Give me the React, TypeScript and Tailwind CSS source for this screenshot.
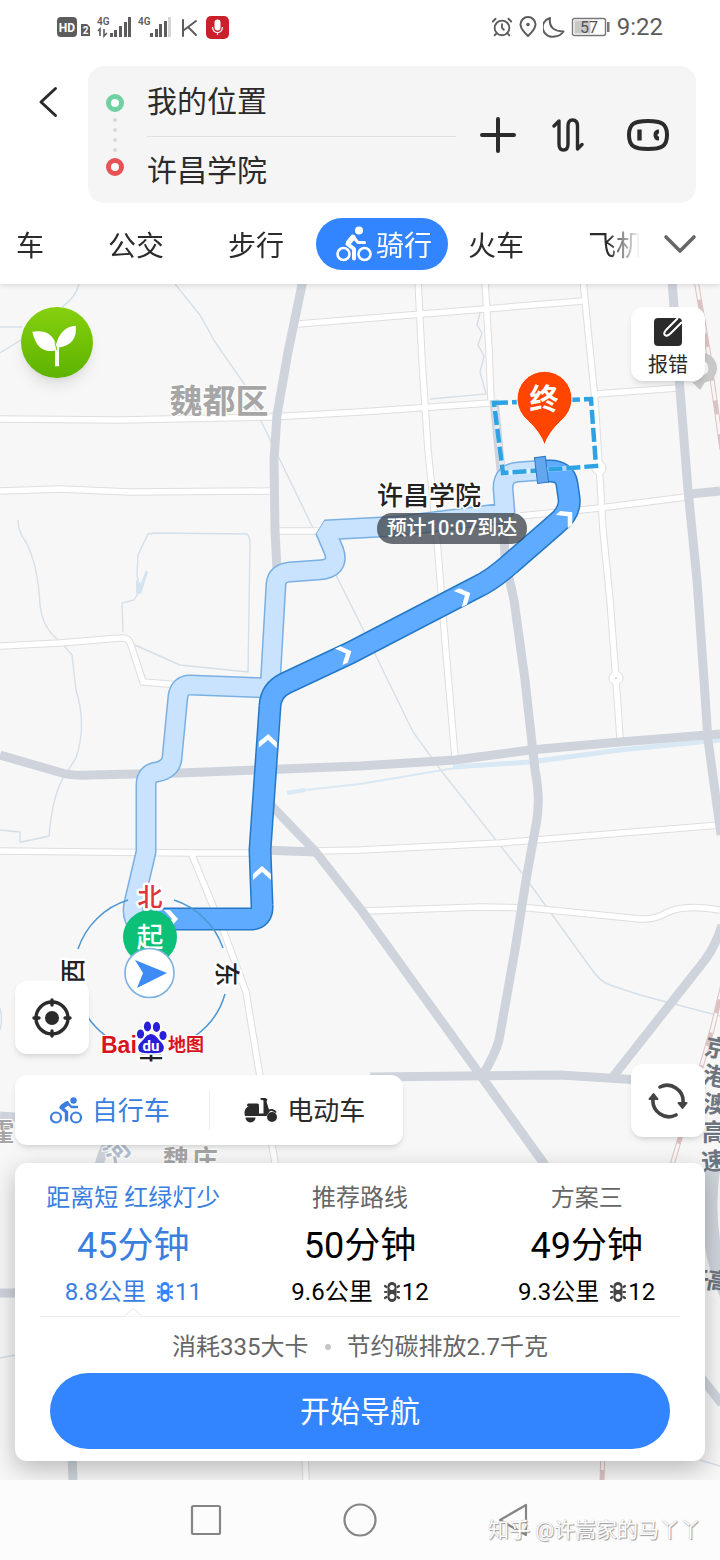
import React, { useState } from 'react';
import { AlarmClock } from 'lucide-react';

const PLANS = [
    { title: '距离短 红绿灯少', time: '45分钟', distance: '8.8公里', lights: 11 },
    { title: '推荐路线', time: '50分钟', distance: '9.6公里', lights: 12 },
    { title: '方案三', time: '49分钟', distance: '9.3公里', lights: 12 },
];

const TABS = ['公交', '步行', '骑行', '火车', '飞机'];

// [x, y, rotation] of the white direction marks on the chosen route
const ROUTE_MARKS = [
    [268, 741, 2],
    [262, 873, 0],
    [345, 654, 66],
    [464, 596, 64],
    [567, 517, 48],
    [171, 919, 90],
];

const MAIN_ROADS = [
    'M303 280 L288 352 L277 415 L274 460 L275 530 L277 570 L268 690 L266 800 L315 851 L362 911 L481 1076 L545 1165',
    'M0 755 L62 773 Q72 776 90 775 L180 773 L360 766 L455 760 L530 750 L620 742 L720 734',
    'M494 400 L502 480 L505 560 L514 600 L525 680 L535 770 Q541 800 536 825 L526 880 L515 950 L499 1040 Q495 1055 482 1076',
    'M672 280 L680 390 L688 490 L697 580 L704 680 L708 740 L721 835',
    'M690 494 L720 491',
    'M722 925 Q716 945 705 960 L638 1045 L612 1078',
    'M370 1077 L560 1075 L640 1080',
    'M262 850 L315 852',
    'M0 1116 L30 1118',
    'M0 1293 L20 1293',
    'M110 1140 Q102 1150 98 1170',
    'M72 1450 L73 1482',
    'M700 1376 L722 1404',
];

const SIDE_ROADS = [
    'M298 324 L360 319 L583 301',
    'M0 419 L120 420 L270 417 L360 412 L490 403',
    'M596 394 L677 388',
    'M0 491 L60 489 L130 492 L272 491',
    'M277 531 L318 531',
    'M0 646 L60 643 L120 638 Q129 637 131 645 L143 682 L180 685',
    'M418 280 L422 360 L428 450 L437 540 L445 640 L455 757',
    'M485 280 L489 350 L491 400',
    'M583 280 L590 350 L595 400 L600 480 L603 530 L610 600 L616 680 L620 738',
    'M520 516 L600 508 L686 497',
    'M0 851 L190 853 L260 853',
    'M315 851 L360 850 L500 843 L720 825',
    'M192 855 L225 935 L246 992 L258 1065 L276 1168',
    'M365 911 L480 907 L530 908 L640 919 Q655 920 668 912 Q686 904 720 910',
    'M305 1450 L306 1482',
    'M710 735 L720 735',
];

const STREAMS = [
    'M175 284 L200 315 L215 342 L245 385 L262 423 L280 460 L313 528 L340 583 L360 623 L413 732 L443 773 L522 873 L590 967 Q600 982 610 985 L640 995 L720 1016',
    'M79 284 Q76 297 62 307',
    'M0 327 L22 327',
    'M0 353 L24 338',
    'M18 520 Q18 532 26 542 Q38 565 40 605 Q43 630 60 641 L72 655 L76 690 Q87 725 76 758 L62 780 Q52 800 49 836 Q32 840 20 842 L20 832 L0 830',
    'M123 632 L122 603 L134 600 L140 590 L137 575 L138 555 L148 534 L155 533 L247 534 Q250 536 250 545 L248 672 L180 665 L135 645',
    'M480 313 L477 325 L482 333 L478 345 L484 356 L480 372 L486 394 L430 399',
    'M0 1008 Q3 1020 0 1030',
    'M0 1358 L15 1355',
    'M700 1460 L720 1466',
];

const RAILWAY = 'M696 280 L708 350 L722 450 M724 980 L712 1030 L672 1165 M603 1450 L602 1482';

const MAIN_ROUTE =
    'M150 919 L250 919 Q263 919 262 905 L260 850 L270 706 Q271 690 286 683 L350 653 L477 587 Q492 580 510 564 L556 524 Q571 512 569 498 L567 484 Q565 471 550 471 L541 471';
const OTHER_ROUTE =
    'M138 925 Q131 915 134 903 L146 852 L146 785 Q146 773 157 772 Q171 769 172 758 L178 696 Q180 685 190 685 L270 688 L276 584 Q277 573 290 572 L318 570 Q340 569 334 551 L325 530 L400 526 L505 513 L503 488 Q503 473 518 472 L545 470';

function CyclistIcon({ className }: { className: string }) {
    return (
        <svg viewBox="0 0 32 27" className={className} fill="none" stroke="currentColor" aria-hidden="true">
            <circle cx="6" cy="20.5" r="5" strokeWidth="2.2" />
            <circle cx="26" cy="20.5" r="5" strokeWidth="2.2" />
            <circle cx="23.5" cy="3.5" r="3.2" fill="currentColor" stroke="none" />
            <path d="M17 7 L11 10.5 L16.5 15 V23" strokeWidth="3.4" strokeLinecap="round" strokeLinejoin="round" />
            <path d="M17.500 6 L21.5 10 H27" strokeWidth="2.4" strokeLinecap="round" strokeLinejoin="round" />
            <path d="M12.5 9.5 L17 6.5" strokeWidth="4.6" strokeLinecap="round" />
        </svg>
    );
}

// taller rider used inside the selected tab
function TabCyclistIcon() {
    return (
        <svg viewBox="0 0 36 36" className="h-9 w-9" fill="none" stroke="currentColor" aria-hidden="true">
            <circle cx="7.5" cy="28" r="6" strokeWidth="2.6" />
            <circle cx="28.5" cy="28" r="6" strokeWidth="2.6" />
            <circle cx="23" cy="4.5" r="4" fill="currentColor" stroke="none" />
            <path d="M16.5 11 L11.5 18 L18 23 V32.5" strokeWidth="4" strokeLinecap="round" strokeLinejoin="round" />
            <path d="M17 10.500 L22 16.5 H28.5" strokeWidth="3" strokeLinecap="round" strokeLinejoin="round" />
            <path d="M13 16 L17 11.500" strokeWidth="5.500" strokeLinecap="round" />
        </svg>
    );
}

function ScooterIcon() {
    return (
        <svg viewBox="0 0 34 26" className="h-[26px] w-[34px]" fill="#2b2b2b" aria-hidden="true">
            <path d="M2 19 Q0 12 6 9 H16 V16.5 H20.5 L20.500 3.5 L17.500 2.5 V1 H22.500 L24.500 2.500 L23.500 4.500 L26.5 14.5 L23.5 19 Z" />
            <rect x="4" y="6.500" width="12" height="3" rx="1.5" />
            <path d="M2.500 20.5 H12.5 A5 5 0 0 1 2.500 20.5 Z" />
            <circle cx="29" cy="20" r="5" />
            <path d="M24 16 Q26 12.500 29 13 Q31.5 13.500 33 15.500" stroke="#2b2b2b" strokeWidth="1.8" fill="none" />
        </svg>
    );
}

function LightIcon() {
    return (
        <svg viewBox="0 0 18 20" className="h-5 w-[18px]" aria-hidden="true">
            <path
                d="M2 4 L3.5 5 M2 10 H3.5 M2 16 L3.5 15 M16 4 L14.5 5 M16 10 H14.5 M16 16 L14.5 15"
                stroke="currentColor"
                strokeWidth="2.2"
                strokeLinecap="round"
            />
            <rect x="4.5" y="0" width="9" height="20" rx="4.5" fill="currentColor" />
            <circle cx="9" cy="5.6" r="2.5" fill="white" />
            <circle cx="9" cy="14.4" r="2.5" fill="white" />
        </svg>
    );
}

function StatusBar() {
    return (
        <div className="flex h-[54px] items-center justify-between px-[57px] text-[#5c5c5c]">
            <svg viewBox="0 0 172 24" className="h-6 w-[172px]" fill="currentColor" aria-label="信号状态">
                <rect x="0" y="2" width="20" height="20" rx="4" />
                <text x="10" y="17" fontSize="12" fontWeight="700" fill="white" textAnchor="middle">HD</text>
                <path d="M24 9 H30 L33 12 V21 H24 Z" />
                <text x="28.5" y="19" fontSize="10" fontWeight="700" fill="white" textAnchor="middle">2</text>
                <text x="40" y="10" fontSize="10" fontWeight="600">4G</text>
                <path d="M43 21 V14 L41 16 M47 14 V21 L50 18" fill="none" stroke="currentColor" strokeWidth="1.6" />
                <path d="M53 18h3v4h-3z M57 15h3v7h-3z M62 11h3v11h-3z M67 7h3v15h-3z M71 2h3v20h-3z" />
                <text x="81" y="10" fontSize="10" fontWeight="600">4G</text>
                <path d="M93 18h3v4h-3z M98 14h3v8h-3z M102 9h3v13h-3z M107 6h3v16h-3z" />
                <path d="M111 2h3v20h-3z" fill="#d5d5d5" />
                <path d="M126 5 V21 M139 6 L127 15 M132 13 L139 20" fill="none" stroke="currentColor" strokeWidth="2" strokeLinecap="round" />
                <rect x="149" y="1" width="23" height="23" rx="5" fill="#c9202b" />
                <rect x="157.5" y="4.5" width="6" height="11" rx="3" fill="white" />
                <path d="M155.5 12 Q156 17.5 160.5 17.5 Q165 17.5 165.5 12 M160.5 17.5 V20" fill="none" stroke="white" strokeWidth="1.2" />
            </svg>
            <div className="flex items-center gap-[6px]">
                <AlarmClock className="h-[22px] w-[22px]" strokeWidth={2} />
                <svg viewBox="0 0 18 22" className="h-[22px] w-[18px]" fill="none" stroke="currentColor" strokeWidth="2" aria-hidden="true">
                    <path d="M9 20 Q1.5 13 1.5 8.5 A7.5 7.5 0 0 1 16.5 8.5 Q16.5 13 9 20 Z" />
                    <circle cx="9" cy="8.5" r="1.8" fill="currentColor" stroke="none" />
                </svg>
                <svg viewBox="0 0 22 22" className="h-[22px] w-[22px]" fill="none" stroke="currentColor" strokeWidth="2" strokeLinejoin="round" aria-hidden="true">
                    <path d="M7 2 Q5 15 20.500 15.500 Q17 20.500 11.500 20.500 A9.500 9.500 0 0 1 7 2 Z" />
                </svg>
                <svg viewBox="0 0 40 20" className="h-5 w-10" aria-label="电量57">
                    <rect x="1.5" y="1.5" width="33" height="17" rx="2" fill="none" stroke="#777" strokeWidth="1.4" />
                    <rect x="3.5" y="3.5" width="16" height="13" fill="#c8c8c8" />
                    <rect x="36" y="5" width="2.5" height="10" fill="#777" />
                    <text x="18" y="15.5" fontSize="16" textAnchor="middle" fill="#555">57</text>
                </svg>
                <span className="text-2xl leading-6">9:22</span>
            </div>
        </div>
    );
}

function SearchPanel() {
    return (
        <div className="flex items-start pt-3 pr-6">
            <button className="flex h-[72px] w-[88px] shrink-0 items-center pl-[38px]" aria-label="返回">
                <svg viewBox="0 0 20 32" className="h-8 w-5" fill="none" stroke="#2b2b2b" strokeWidth="3" strokeLinecap="round" strokeLinejoin="round">
                    <path d="M17.5 2.5 L3 16 L17.5 29.5" />
                </svg>
            </button>
            <div className="flex min-w-0 flex-1 items-center rounded-2xl bg-[#f5f5f5] pr-5 pl-[18px]">
                <div className="flex shrink-0 flex-col items-center gap-[6px]">
                    <span className="h-[18px] w-[18px] rounded-full border-[5px] border-[#6fd0a0] bg-white"></span>
                    {[0, 1, 2, 3].map((dot) => (
                        <span key={dot} className="h-1 w-1 rounded-full bg-[#d8d8d8]"></span>
                    ))}
                    <span className="h-[18px] w-[18px] rounded-full border-[5px] border-[#e75256] bg-white"></span>
                </div>
                <div className="mr-6 ml-[23px] min-w-0 flex-1 text-[30px] text-[#2b2b2b]">
                    <input aria-label="起点" defaultValue="我的位置" className="block h-[70px] w-full bg-transparent pb-1 outline-none" />
                    <div className="h-px bg-[#e0e0e0]"></div>
                    <input aria-label="终点" defaultValue="许昌学院" className="block h-[66px] w-full bg-transparent pb-1 outline-none" />
                </div>
                <div className="flex shrink-0 items-center gap-9">
                    <button aria-label="添加途经点">
                        <svg viewBox="0 0 36 36" className="h-9 w-9" stroke="#2b2b2b" strokeWidth="4" strokeLinecap="round">
                            <path d="M18 2 V34 M2 18 H34" />
                        </svg>
                    </button>
                    <button aria-label="交换起终点">
                        <svg viewBox="0 0 32 34" className="h-[34px] w-8" fill="none" stroke="#2b2b2b" strokeWidth="3.4" strokeLinecap="round" strokeLinejoin="round">
                            <path d="M2 8 L7 3 V26 Q7 32 11.5 32 Q16 32 16 26 V8 Q16 2 20.5 2 Q25.5 2 25.5 8 V31 L30 26.5" />
                        </svg>
                    </button>
                    <button className="flex w-14 justify-center" aria-label="语音助手">
                        <svg viewBox="0 0 42 32" className="h-8 w-[42px]" fill="none" stroke="#2b2b2b">
                            <path d="M21 2 C35 2 40 5 40 16 C40 27 35 30 21 30 C7 30 2 27 2 16 C2 5 7 2 21 2 Z" strokeWidth="4" />
                            <path d="M12.5 10.5 V21.5" strokeWidth="4.4" />
                            <path d="M32 12.500 Q28.500 12.500 28.500 16 Q28.500 19.500 32 19.500" strokeWidth="4" />
                        </svg>
                    </button>
                </div>
            </div>
        </div>
    );
}

function TravelTabs() {
    const [active, setActive] = useState('骑行');

    return (
        <div className="flex items-center pt-[15px] pb-[14px] text-[28px] text-[#2b2b2b]">
            <nav className="flex h-[52px] min-w-0 flex-1 overflow-hidden [mask-image:linear-gradient(to_right,black_95%,transparent)]">
                <button className="w-[76px] shrink-0 pt-[5px] pr-8 text-right">车</button>
                {TABS.map((tab) => (
                    <div key={tab} className="flex w-[120px] shrink-0">
                        {tab === active ? (
                            <button className="flex w-[132px] shrink-0 items-center justify-center gap-1 rounded-full bg-[#3385ff] pl-1 text-white">
                                <TabCyclistIcon />
                                <span className="pt-[5px]">{tab}</span>
                            </button>
                        ) : (
                            <button onClick={() => setActive(tab)} className="w-full pt-[5px]">{tab}</button>
                        )}
                    </div>
                ))}
            </nav>
            <button className="flex w-20 shrink-0 justify-center" aria-label="更多方式">
                <svg viewBox="0 0 34 20" className="h-5 w-[34px]" fill="none" stroke="#666" strokeWidth="3.6" strokeLinecap="round" strokeLinejoin="round">
                    <path d="M3 3 L17 17 L31 3" />
                </svg>
            </button>
        </div>
    );
}

function RouteMap() {
    return (
        <svg
            viewBox="0 284 720 1196"
            preserveAspectRatio="xMidYMid slice"
            className="absolute inset-0 h-full w-full"
            fill="none"
            aria-label="骑行路线地图"
        >
            <g stroke="#d5dfe8" strokeWidth="1.4">
                {STREAMS.map((d) => <path key={d} d={d} />)}
            </g>
            <path d="M136 580 L141 583 L146 570 L148 572 L141 594 L136 593 Z" fill="#d3e3ef" />
            <path d="M287 792 L305 790 L360 784 L455 768" stroke="#d8e8f4" strokeWidth="2" />
            <path d="M287 793 L305 790" stroke="#d8e8f4" strokeWidth="4" />
            <path d="M453 767 L530 762 L620 750 L720 740" stroke="#d8e8f4" strokeWidth="5" />

            <g stroke="#dedede" strokeWidth="7.5">
                {SIDE_ROADS.map((d) => <path key={d} d={d} />)}
            </g>
            <g fill="white" stroke="#dedede">
                <circle cx="599" cy="468" r="7" />
                <circle cx="616" cy="678" r="7" />
            </g>
            <g stroke="white" strokeWidth="5.5">
                {SIDE_ROADS.map((d) => <path key={d} d={d} />)}
            </g>
            <circle cx="616" cy="678" r="1" fill="#ccc" />

            <g stroke="#cfd4dc" strokeWidth="9" strokeLinejoin="round">
                {MAIN_ROADS.map((d) => <path key={d} d={d} />)}
            </g>
            <path d="M712 1170 Q702 1240 730 1300" stroke="#cfd4dc" strokeWidth="16" />

            {/* railway */}
            <path d={RAILWAY} stroke="#dcc3c3" strokeWidth="5" />
            <path d={RAILWAY} stroke="#faf5f5" strokeWidth="3" strokeDasharray="20 14" />
            <circle cx="702" cy="368" r="11" stroke="#c8c8c8" strokeWidth="8" />
            <path d="M692 382 L700 390 L705 382 Z" fill="#c8c8c8" />

            <g fontWeight="700" fill="#a6a6a6" stroke="white" strokeWidth="2" paintOrder="stroke" textAnchor="middle">
                <text x="219" y="413" fontSize="33">魏都区</text>
                <text x="2" y="1141" fontSize="25">霍</text>
                <text x="176" y="1169" fontSize="26">魏</text>
                <text x="205" y="1169" fontSize="26">庄</text>
                <text x="118" y="1160" fontSize="25" fill="#b4bfce" transform="rotate(-40 118 1152)">河</text>
            </g>
            <g fontWeight="700" fill="#6d7580" fontSize="24" textAnchor="middle">
                <text x="717" y="1057" transform="rotate(12 717 1048)">京</text>
                <text x="715" y="1085" transform="rotate(10 715 1076)">港</text>
                <text x="715" y="1113" transform="rotate(6 715 1104)">澳</text>
                <text x="714" y="1141">高</text>
                <text x="713" y="1170" transform="rotate(-5 713 1160)">速</text>
                <text x="697" y="1287">许</text>
                <text x="719" y="1290" transform="rotate(10 719 1280)">高</text>
            </g>

            <g strokeLinejoin="bevel">
                <path d={OTHER_ROUTE} stroke="#79b0e3" strokeWidth="21" />
                <path d={OTHER_ROUTE} stroke="#c9e3ff" strokeWidth="18" />
                <path d={MAIN_ROUTE} stroke="#2478c6" strokeWidth="23" />
                <path d={MAIN_ROUTE} stroke="#5eabff" strokeWidth="20" />
            </g>
            {ROUTE_MARKS.map(([x, y, turn]) => (
                <path
                    key={`${x}-${y}`}
                    d="M-9 1 L0 -7 L9 1 V7 L0 -1 L-9 7 Z"
                    fill="white"
                    transform={`translate(${x} ${y}) rotate(${turn})`}
                />
            ))}

            {/* campus outline and destination */}
            <path d="M494 403 L591 399 L596 466 L503 473 Z" stroke="white" strokeWidth="5" opacity="0.5" />
            <path d="M494 403 L591 399 L596 466 L503 473 Z" stroke="#2ea2e3" strokeWidth="4.5" strokeDasharray="14 4" />
            <rect x="536" y="457" width="11" height="26" fill="#62a7ee" stroke="#2a78c4" transform="rotate(-7 541 470)" />
            <path d="M544.5 445 Q540 432 527 420 A27.5 27.5 0 1 1 562 420 Q549 432 544.5 445 Z" fill="#ff4500" stroke="white" />
            <text x="544" y="410" fontSize="29" fontWeight="700" fill="white" textAnchor="middle">终</text>
            <text x="429" y="505" fontSize="26" fontWeight="500" fill="#222" stroke="white" strokeWidth="3" paintOrder="stroke" textAnchor="middle">许昌学院</text>
            <rect x="377" y="513" width="150" height="31" rx="15" fill="#3a4048" opacity="0.75" />
            <text x="452" y="535" fontSize="20" fontWeight="500" fill="white" textAnchor="middle">预计10:07到达</text>

            {/* compass */}
            <path
                d="M78 949 A76.5 76.5 0 0 1 128 900 M174 900 A76.5 76.5 0 0 1 223 948 M225 994 A76.5 76.5 0 0 1 195 1036 M106 1036 A76.5 76.5 0 0 1 80 1002"
                stroke="#4d97d2"
                strokeWidth="1.5"
            />
            <circle cx="150" cy="937" r="27" fill="#0cc077" />
            <text x="150" y="947" fontSize="27" fontWeight="500" fill="white" textAnchor="middle">起</text>
            <g fontSize="25" fontWeight="500" fill="#222" stroke="white" strokeWidth="5" strokeLinejoin="round" paintOrder="stroke" textAnchor="middle">
                <text x="150" y="906" fill="#e0353c">北</text>
                <text x="72" y="981" transform="rotate(-90 72 971)">西</text>
                <text x="227" y="983" transform="rotate(90 227 974)">东</text>
                <text x="151" y="1058" transform="rotate(180 151 1049)">南</text>
            </g>
            <circle cx="149.5" cy="973" r="24.5" fill="white" stroke="#7db2df" strokeWidth="1.6" />
            <path d="M135 960 L167 973 L137 988 L143 973 Z" fill="#3f8bf6" />

            {/* map logo */}
            <g stroke="white" strokeWidth="3" paintOrder="stroke" fill="#2a1fd8">
                <path d="M151 1034 Q155 1034 159 1040 Q166 1046 163 1051 Q160 1054 151 1053 Q142 1054 139 1051 Q136 1046 143 1040 Q147 1034 151 1034 Z" />
                <ellipse cx="140.5" cy="1034" rx="3.6" ry="4.6" />
                <ellipse cx="147.5" cy="1026.5" rx="3.6" ry="5" />
                <ellipse cx="156.5" cy="1027" rx="3.6" ry="5" />
                <ellipse cx="163" cy="1035.5" rx="3.6" ry="4.6" />
            </g>
            <text x="151" y="1051" fontSize="15" fontWeight="700" fill="white" textAnchor="middle">du</text>
            <g fill="#d8141c" stroke="white" strokeWidth="2" paintOrder="stroke">
                <text x="101" y="1053" fontSize="23" fontWeight="700" fontFamily="Liberation Sans">Bai</text>
                <text x="168" y="1051" fontSize="18" fontWeight="700">地图</text>
            </g>
        </svg>
    );
}

function MapControls() {
    const [vehicle, setVehicle] = useState('自行车');

    return (
        <div className="flex items-end justify-between">
            <div className="flex flex-col items-start gap-[21px]">
                <button className="flex h-[73px] w-[74px] items-center justify-center rounded-xl bg-white shadow-md" aria-label="定位">
                    <svg viewBox="0 0 40 40" className="h-10 w-10" fill="none" stroke="#2b2b2b" strokeWidth="3.4" strokeLinecap="round">
                        <circle cx="20" cy="20" r="16" />
                        <circle cx="20" cy="20" r="7" fill="#2b2b2b" stroke="none" />
                        <path d="M20 2 V7 M20 33 V38 M2 20 H7 M33 20 H38" />
                    </svg>
                </button>
                <div className="flex h-[70px] w-[388px] items-center rounded-xl bg-white text-[26px] text-[#2b2b2b] shadow-md">
                    <button
                        onClick={() => setVehicle('自行车')}
                        className={`flex flex-1 items-center justify-center gap-[10px] pr-1 ${vehicle === '自行车' ? 'text-[#3a7fe0]' : ''}`}
                    >
                        <CyclistIcon className="h-[27px] w-8" />
                        <span className="pt-[3px]">自行车</span>
                    </button>
                    <div className="h-10 w-px bg-[#efefef]"></div>
                    <button
                        onClick={() => setVehicle('电动车')}
                        className={`flex flex-1 items-center justify-center gap-[10px] pr-1 ${vehicle === '电动车' ? 'text-[#3a7fe0]' : ''}`}
                    >
                        <ScooterIcon />
                        <span className="pt-[3px]">电动车</span>
                    </button>
                </div>
            </div>
            <button className="mb-2 flex h-[73px] w-[74px] items-center justify-center rounded-xl bg-white shadow-md" aria-label="刷新">
                <svg viewBox="0 0 40 36" className="h-9 w-10" fill="none" stroke="#444" strokeWidth="3.6" strokeLinecap="round">
                    <path d="M12 4 A16 16 0 0 1 35 20" />
                    <path d="M28 32 A16 16 0 0 1 5 16" />
                    <path d="M30.5 20 H38.5 L34.5 25 Z M9.5 16 H1.5 L5.5 11 Z" fill="#444" strokeWidth="2" strokeLinejoin="round" />
                </svg>
            </button>
        </div>
    );
}

function PlanCard() {
    const [selected, setSelected] = useState(0);

    return (
        <section className="mt-[18px] rounded-xl bg-white pt-[17px] pb-3 shadow-[0_8px_24px_rgba(0,0,0,0.25)]">
            <div className="grid grid-cols-3 px-[5px]">
                {PLANS.map((plan, i) => (
                    <button
                        key={plan.title}
                        onClick={() => setSelected(i)}
                        className={`relative flex flex-col items-center pb-2 ${i === selected ? 'text-[#3a7fe0]' : 'text-black'}`}
                    >
                        <span className={`text-2xl leading-9 ${i === selected ? '' : 'text-[#666]'}`}>{plan.title}</span>
                        <span className="text-4xl leading-[60px]">{plan.time}</span>
                        <span className="flex items-center text-2xl leading-8">
                            {plan.distance}
                            <span className={`mr-px ml-[10px] ${i === selected ? 'text-[#3385ff]' : 'text-[#444]'}`}>
                                <LightIcon />
                            </span>
                            {plan.lights}
                        </span>
                        {i === selected && (
                            <svg viewBox="0 0 18 9" className="absolute -bottom-px h-[9px] w-[18px]" fill="white" stroke="#e8e8e8" aria-hidden="true">
                                <path d="M0 8.5 L9 0.5 L18 8.5" />
                            </svg>
                        )}
                    </button>
                ))}
            </div>
            <div className="mx-[25px] h-px bg-[#ececec]"></div>
            <p className="flex h-14 items-center justify-center gap-4 pt-[3px] text-2xl leading-8 text-[#666]">
                消耗335大卡
                <span className="h-[6px] w-[6px] rounded-full bg-[#c4c4c4]"></span>
                节约碳排放2.7千克
            </p>
            <div className="px-[35px]">
                <button className="h-[76px] w-full rounded-full bg-[#3385ff] text-[30px] text-white">开始导航</button>
            </div>
        </section>
    );
}

function SystemNav() {
    return (
        <footer className="relative flex h-20 items-center justify-center bg-[#fcfcfc]">
            <button className="flex w-[154px] justify-center" aria-label="最近任务">
                <svg viewBox="0 0 34 34" className="h-[34px] w-[34px]" fill="none" stroke="#858585" strokeWidth="2.2">
                    <rect x="3" y="3" width="28" height="28" rx="1.5" />
                </svg>
            </button>
            <button className="flex w-[154px] justify-center" aria-label="主页">
                <svg viewBox="0 0 34 34" className="h-[34px] w-[34px]" fill="none" stroke="#858585" strokeWidth="2.2">
                    <circle cx="17" cy="17" r="15.5" />
                </svg>
            </button>
            <button className="flex w-[154px] justify-center" aria-label="返回上一页">
                <svg viewBox="0 0 34 34" className="h-[34px] w-[34px]" fill="none" stroke="#858585" strokeWidth="2.2" strokeLinejoin="round">
                    <path d="M29 2 V32 L3 17 Z" />
                </svg>
            </button>
            <span className="absolute right-[19px] bottom-[15px] text-[21px] leading-[30px] text-white [text-shadow:1px_1px_1px_#999,0_0_1px_#aaa]">
                知乎 @许嵩家的马丫丫
            </span>
        </footer>
    );
}

export default function App() {
    return (
        <div className="flex min-h-screen flex-col bg-white font-[Roboto,'Noto_Sans_CJK_SC',sans-serif]">
            <header className="relative z-10 bg-white shadow-[0_1px_6px_rgba(0,0,0,0.15)]">
                <StatusBar />
                <SearchPanel />
                <TravelTabs />
            </header>
            <main className="relative flex flex-1 flex-col overflow-hidden bg-[#f7f7f7] px-[15px] pt-[23px] pb-[19px]">
                <RouteMap />
                <div className="relative flex flex-1 flex-col justify-between">
                    <div className="flex items-start justify-between pb-[600px]">
                        <button className="ml-[6px] rounded-full bg-linear-to-b from-[#86d00e] to-[#5cb300] shadow-lg" aria-label="低碳出行">
                            <svg viewBox="0 0 72 72" className="h-[71px] w-[72px]" fill="white">
                                <path d="M11 25 Q30 22 35 38 Q40 20 55 19 Q57 38 38 41 L38 60 H34 V44 Q16 48 11 25 Z" />
                                <path d="M34 36 L36 44" stroke="#74c208" />
                            </svg>
                        </button>
                        <button className="flex h-[74px] w-[74px] flex-col items-center justify-center gap-1 rounded-xl bg-white pt-2 text-xl leading-7 text-[#2b2b2b] shadow-md">
                            <svg viewBox="0 0 30 30" className="h-[30px] w-[30px]">
                                <rect x="1" y="1" width="28" height="28" rx="4" fill="#2b2b2b" />
                                <path d="M25 1 L13 13 Q10 17 12 18 Q14 20 18 16 L29 5" fill="#2b2b2b" stroke="white" strokeWidth="2" strokeLinejoin="round" />
                            </svg>
                            报错
                        </button>
                    </div>
                    <div>
                        <MapControls />
                        <PlanCard />
                    </div>
                </div>
            </main>
            <SystemNav />
        </div>
    );
}
